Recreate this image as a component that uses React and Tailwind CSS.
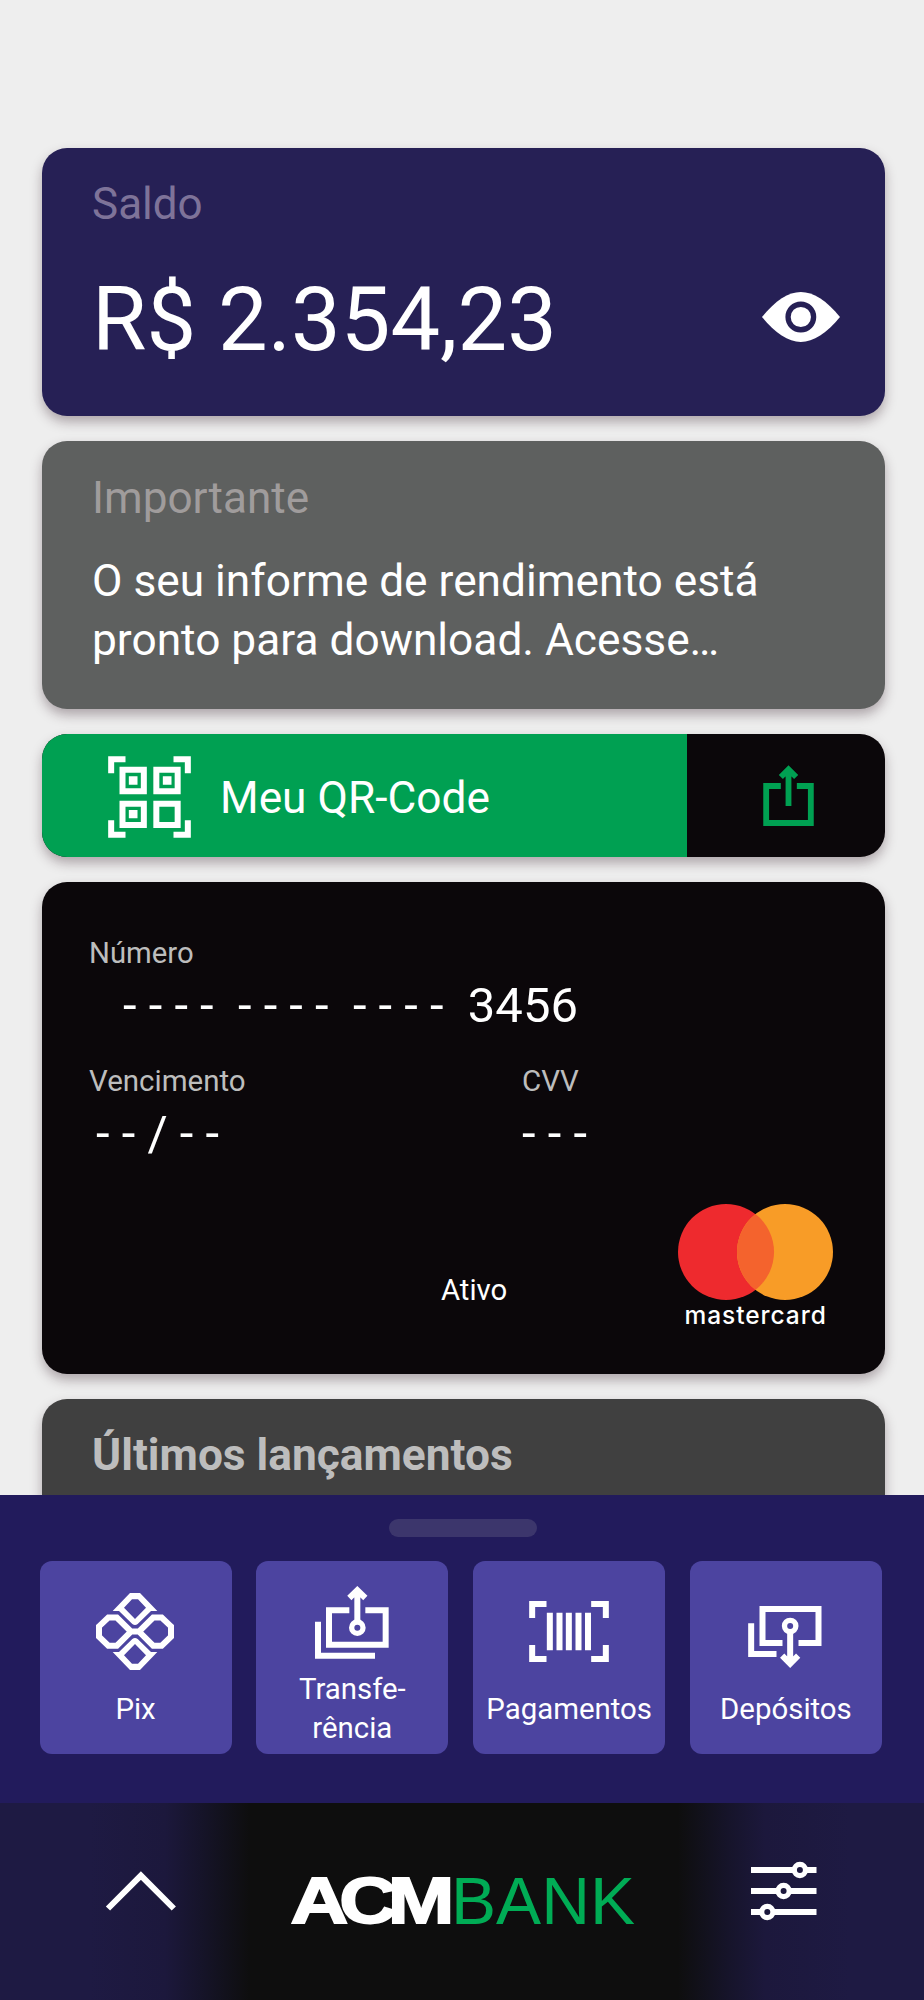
const actions = [
  { label: ['Pix'], Icon: PixIcon, box: 'h-[129px] pt-8 pr-px' },
  { label: ['Transfe-', 'rência'], Icon: TransferIcon, box: 'h-[109px] pt-[25px]' },
  { label: ['Pagamentos'], Icon: BarcodeIcon, box: 'h-[129px] pt-10' },
  { label: ['Depósitos'], Icon: DepositIcon, box: 'h-[129px] pt-[45px] pr-px' },
]

function EyeIcon() {
  return (
    <svg className="w-[78px] h-[50px]" viewBox="845 486 235 150" fill="#fff">
      <path d="M845 561C885 512 925 486 962 486S1040 512 1080 561C1040 610 1000 636 962 636S885 610 845 561Z" />
      <circle cx="962" cy="561" r="38.5" fill="#fff" stroke="#262055" strokeWidth="16" />
    </svg>
  )
}

function QrIcon() {
  return (
    <svg className="w-[83px] h-[82px]" viewBox="265 107 248 246" fill="none" stroke="#fff" strokeWidth="18">
      <path d="M274 159V117H317M461 117H504V159M274 300V343H317M461 343H504V300" />
      <path d="M308 148.500H372V212.500H308ZM409.500 148.500H473.500V212.500H409.500ZM308 250H372V314H308ZM409.500 250H473.500V314H409.500Z" />
      <path d="M327 168h26v25h-26zM429 168h26v25h-26zM327 269h26v25h-26z" fill="#fff" stroke="none" />
    </svg>
  )
}

function ShareIcon() {
  return (
    <svg className="w-[51px] h-[61px]" viewBox="249.500 135 153 183" fill="none" stroke="#00a052" strokeWidth="17.500">
      <path d="M303 198H259V309H393V198H351M326 148V258M303 171L326 148L349 171" />
    </svg>
  )
}

function PixIcon() {
  const half = 'M330 309H360L412 363H393L353 402Q345 408 337 402L297 363H278ZM336 328L312 353L345 387L378 353L354 328Z'
  return (
    <svg className="w-[78px] h-[77px]" viewBox="228 309 234 231" fill="#fff" fillRule="evenodd">
      <path d={half} />
      <path d={half} transform="matrix(1 0 0 -1 0 849)" />
      <path
        d="M237 409L265 382.500H290.500L333 424.500L290.500 467H265L237 440ZM453 409L425 382.500H399.500L357 424.500L399.500 467H425L453 440ZM330 424.500H360"
        fill="none"
        stroke="#fff"
        strokeWidth="18"
      />
    </svg>
  )
}

function TransferIcon() {
  return (
    <svg className="w-[74px] h-[73px]" viewBox="885 289 222 219" fill="none" stroke="#fff" strokeWidth="18">
      <path d="M988 362H927V465H1097V362H1036M894 396V498H1065M1012 302V394M988 325L1012 301.500L1036 325" />
      <circle cx="1012" cy="414" r="17" strokeWidth="16" />
    </svg>
  )
}

function BarcodeIcon() {
  return (
    <svg className="w-20 h-[61px]" viewBox="195.500 332 240 183" fill="none" stroke="#fff" strokeWidth="18">
      <path d="M205 383V341H248M382 341H426V383M205 464V506H248M382 506H426V464" />
      <path d="M258 367V480M287 367V480M315 367V480M344 367V480M372.500 367V480" />
    </svg>
  )
}

function DepositIcon() {
  return (
    <svg className="w-[74px] h-[62px]" viewBox="853.500 347 222 186" fill="none" stroke="#fff" strokeWidth="18">
      <path d="M957 458H897V356H1065V458H1005M863 399V491H939M980 427V519M956 496L980 520L1004 496" />
      <circle cx="980" cy="407" r="17" strokeWidth="16" />
    </svg>
  )
}

function MastercardLogo() {
  return (
    <div className="w-[155px] flex flex-col items-center">
      <svg className="w-[155px] h-24" viewBox="0 0 155 96">
        <circle cx="48" cy="48" r="48" fill="#ee2a2e" />
        <circle cx="107" cy="48" r="48" fill="#f89c27" />
        <path d="M77.500 10.100A48 48 0 0 1 77.500 85.900A48 48 0 0 1 77.500 10.100Z" fill="#f4632d" />
      </svg>
      <span className="pl-px font-[Inter] font-medium text-[24.500px] leading-[30px] text-white whitespace-nowrap tracking-[0.95px]">
        mastercard
      </span>
    </div>
  )
}

function BankLogo() {
  return (
    <svg className="mt-[60px] ml-[104px] w-[370px] h-[80px]" viewBox="282 0 370 80" fontFamily="Liberation Sans, Arial, sans-serif">
      <text
        transform="translate(290.500 59.900) scale(1.25 1)"
        fontSize="64"
        fontWeight="bold"
        fill="#fff"
        stroke="#fff"
        strokeWidth="1.800"
        letterSpacing="-7.300"
      >
        ACM
      </text>
      <text x="451" y="60.700" fontSize="66" fill="#00ac55" textLength="184" lengthAdjust="spacingAndGlyphs">
        BANK
      </text>
    </svg>
  )
}

function SlidersIcon() {
  const knobs = [
    { x: 48.9, y: 9 },
    { x: 32.6, y: 30 },
    { x: 16.3, y: 51 },
  ]
  return (
    <svg className="w-[66px] h-[60px]" viewBox="0 0 66 60" fill="none" stroke="#fff" strokeWidth="5.800">
      {knobs.map(({ x, y }) => (
        <g key={y}>
          <path d={`M0 ${y}H${x - 5}M${x + 5} ${y}H65.500`} />
          <circle cx={x} cy={y} r="5.600" strokeWidth="5.200" />
        </g>
      ))}
    </svg>
  )
}

const card = 'w-[842.600px] rounded-[25px] shadow-[0_6px_12px_rgba(60,40,50,0.36)]'

export default function App() {
  return (
    <div className="w-[924px] h-[2000px] flex flex-col overflow-hidden bg-[#eeeeee] font-[Roboto,sans-serif]">
      <main className="h-[1495px] shrink-0 overflow-hidden pt-[148px] pl-[42px] flex flex-col">
        {/* Saldo */}
        <section className={`${card} h-[268px] shrink-0 bg-[#262055] pt-[31px] pl-[50px] pr-[45px]`}>
          <h2 className="text-[44px] leading-[50px] text-[#7e7399]">Saldo</h2>
          <div className="mt-[41px] flex items-center justify-between">
            <span className="text-[88.400px] leading-[100px] text-white">R$ 2.354,23</span>
            <div className="pb-1.5">
              <EyeIcon />
            </div>
          </div>
        </section>

        {/* Aviso */}
        <section className={`${card} mt-[25px] h-[268px] shrink-0 bg-[#5e605f] pt-8 pl-[50px]`}>
          <h2 className="text-[44.100px] leading-[50px] text-[#a09c9c]">Importante</h2>
          <p className="mt-[29px] text-[44.250px] leading-[59.300px] text-white">
            O seu informe de rendimento está
            <br />
            pronto para download. Acesse…
          </p>
        </section>

        {/* QR-Code */}
        <section className={`${card} mt-[25px] h-[123px] shrink-0 flex overflow-hidden bg-[#0b070a]`}>
          <div className="w-[645px] bg-[#00a052] flex items-center pl-[66px] pt-0.5">
            <QrIcon />
            <span className="ml-[29px] pt-0.5 text-[44.250px] leading-[50px] text-white">Meu QR-Code</span>
          </div>
          <div className="grow flex justify-center pt-[31px] pl-1.5">
            <ShareIcon />
          </div>
        </section>

        {/* Cartão */}
        <section className={`${card} mt-[25px] h-[492px] shrink-0 bg-[#0b070a] pt-[51px] pl-[46px] pr-[52px]`}>
          <p className="pl-px text-[29.300px] leading-[40px] text-[#bdbdbd]">Número</p>
          <p className="mt-[4px] pl-[35px] text-[49px] leading-[58px] text-white whitespace-pre">
            {'- - - -  - - - -  - - - -  3456'}
          </p>
          <div className="mt-[26px] flex">
            <div className="w-[434px]">
              <p className="pl-px text-[29.500px] leading-[40px] text-[#bdbdbd]">Vencimento</p>
              <p className="mt-1 pl-2 text-[49px] leading-[58px] text-white">- - / - -</p>
            </div>
            <div>
              <p className="text-[29.500px] leading-[40px] text-[#bdbdbd]">CVV</p>
              <p className="mt-1 text-[49px] leading-[58px] text-white">- - -</p>
            </div>
          </div>
          <div className="mt-[41px] flex justify-between">
            <span className="mt-[66px] ml-[353px] text-[29.300px] leading-[40px] text-white">Ativo</span>
            <MastercardLogo />
          </div>
        </section>

        {/* Lançamentos */}
        <section className={`${card} mt-[25px] h-[268px] shrink-0 bg-[#404040] pt-[31px] pl-[50px]`}>
          <h2 className="text-[44.250px] leading-[50px] font-bold text-[#bdbdbd]">Últimos lançamentos</h2>
        </section>
      </main>

      <div className="h-[308px] shrink-0 bg-[#221b5c] flex flex-col items-center pt-6">
        <div className="ml-0.5 w-[148px] h-[18px] rounded-full bg-[#3c366c]" />
        <div className="mt-6 pr-[2.500px] flex gap-[24.800px]">
          {actions.map(({ label, Icon, box }) => (
            <button key={label[0]} className="w-48 h-[192.500px] rounded-xl bg-[#4c44a0] flex flex-col items-center">
              <span className={`${box} shrink-0`}>
                <Icon />
              </span>
              <span className="text-[29.400px] leading-[39px] text-white text-center">
                {label.map((line) => (
                  <span key={line} className="block">
                    {line}
                  </span>
                ))}
              </span>
            </button>
          ))}
        </div>
      </div>

      <nav className="grow flex items-start bg-[linear-gradient(90deg,#1e1a43_0px,#1e1a43_90px,#1c183c_165px,#16142a_200px,#0e0e0e_250px,#0e0e0e_678px,#16142a_728px,#1c183c_765px,#1e1a43_850px)]">
        <svg className="mt-[67px] ml-[104px] w-[74px] h-[43px]" viewBox="0 0 74 43" fill="none" stroke="#fff" strokeWidth="6">
          <path d="M4 38.500L36.900 5.600L69.800 38.500" />
        </svg>
        <BankLogo />
        <div className="mt-[58px] ml-[99px]">
          <SlidersIcon />
        </div>
      </nav>
    </div>
  )
}
